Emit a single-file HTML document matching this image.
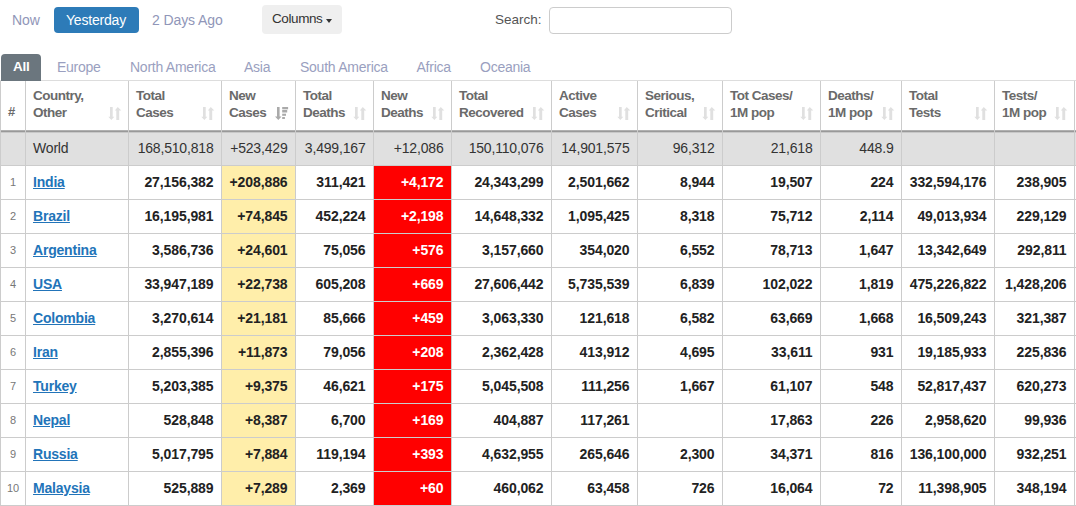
<!DOCTYPE html><html><head><meta charset="utf-8"><style>
html,body{margin:0;padding:0;background:#fff;width:1076px;height:506px;overflow:hidden;position:relative;font-family:"Liberation Sans",sans-serif;}
.a{position:absolute;white-space:nowrap;}
.t{position:absolute;white-space:nowrap;line-height:20px;}
.r{text-align:right;}
.hl{position:absolute;height:1px;}
.vl{position:absolute;width:1px;}

</style></head><body>
<div class="t" style="left:12px;top:10px;font-size:14px;color:#9096b8;letter-spacing:-0.1px;">Now</div>
<div class="a" style="left:54px;top:7px;width:85px;height:26px;background:#2d7bb8;border-radius:4px"></div>
<div class="t" style="left:66px;top:10px;font-size:14px;color:#fff;letter-spacing:-0.2px;">Yesterday</div>
<div class="t" style="left:152px;top:10px;font-size:14px;color:#9096b8;letter-spacing:-0.1px;">2 Days Ago</div>
<div class="a" style="left:262px;top:5px;width:80px;height:29px;background:#efefef;border-radius:4px"></div>
<div class="t" style="left:272px;top:9px;font-size:13.5px;color:#333;letter-spacing:-0.4px;">Columns</div>
<div class="a" style="left:326px;top:19px;width:0;height:0;border-left:3.5px solid transparent;border-right:3.5px solid transparent;border-top:4px solid #333"></div>
<div class="t" style="left:495px;top:9.5px;font-size:13.5px;color:#555;letter-spacing:0px;">Search:</div>
<div class="a" style="left:549px;top:7px;width:181px;height:25px;border:1px solid #ccc;border-radius:4px;background:#fff"></div>
<div class="a" style="left:1px;top:54px;width:40px;height:27px;background:#6b767e;border-radius:4px 4px 0 0"></div>
<div class="t" style="left:13px;top:57px;font-size:13.5px;color:#fff;letter-spacing:-0.3px;font-weight:700">All</div>
<div class="t" style="left:57px;top:57px;font-size:14px;color:#9a9fc0;letter-spacing:-0.25px;">Europe</div>
<div class="t" style="left:130px;top:57px;font-size:14px;color:#9a9fc0;letter-spacing:-0.25px;">North America</div>
<div class="t" style="left:244px;top:57px;font-size:14px;color:#9a9fc0;letter-spacing:-0.25px;">Asia</div>
<div class="t" style="left:300px;top:57px;font-size:14px;color:#9a9fc0;letter-spacing:-0.25px;">South America</div>
<div class="t" style="left:416.5px;top:57px;font-size:14px;color:#9a9fc0;letter-spacing:-0.25px;">Africa</div>
<div class="t" style="left:480px;top:57px;font-size:14px;color:#9a9fc0;letter-spacing:-0.25px;">Oceania</div>
<div class="a" style="left:0;top:132px;width:1076px;height:33px;background:#e0e0e0"></div>
<div class="a" style="left:222px;top:166px;width:73px;height:339px;background:#ffeeaa"></div>
<div class="a" style="left:374px;top:166px;width:77px;height:339px;background:#ff0000"></div>
<div class="hl" style="left:0;top:80px;width:1076px;background:#ddd"></div>
<div class="hl" style="left:0;top:130px;width:1076px;background:#b0b0b0"></div>
<div class="hl" style="left:0;top:131px;width:1076px;background:#999"></div>
<div class="hl" style="left:0;top:132px;width:1076px;background:#c8c8c8"></div>
<div class="hl" style="left:0;top:165px;width:1076px;background:#ccc"></div>
<div class="hl" style="left:0;top:199px;width:1076px;background:#ccc"></div>
<div class="hl" style="left:0;top:233px;width:1076px;background:#ccc"></div>
<div class="hl" style="left:0;top:267px;width:1076px;background:#ccc"></div>
<div class="hl" style="left:0;top:301px;width:1076px;background:#ccc"></div>
<div class="hl" style="left:0;top:335px;width:1076px;background:#ccc"></div>
<div class="hl" style="left:0;top:369px;width:1076px;background:#ccc"></div>
<div class="hl" style="left:0;top:403px;width:1076px;background:#ccc"></div>
<div class="hl" style="left:0;top:437px;width:1076px;background:#ccc"></div>
<div class="hl" style="left:0;top:471px;width:1076px;background:#ccc"></div>
<div class="hl" style="left:0;top:505px;width:1076px;background:#ccc"></div>
<div class="vl" style="left:0px;top:81px;height:425px;background:#ccc"></div>
<div class="vl" style="left:25px;top:81px;height:425px;background:#ccc"></div>
<div class="vl" style="left:128px;top:81px;height:425px;background:#ccc"></div>
<div class="vl" style="left:221px;top:81px;height:425px;background:#ccc"></div>
<div class="vl" style="left:295px;top:81px;height:425px;background:#ccc"></div>
<div class="vl" style="left:373px;top:81px;height:425px;background:#ccc"></div>
<div class="vl" style="left:451px;top:81px;height:425px;background:#ccc"></div>
<div class="vl" style="left:551px;top:81px;height:425px;background:#ccc"></div>
<div class="vl" style="left:637px;top:81px;height:425px;background:#ccc"></div>
<div class="vl" style="left:722px;top:81px;height:425px;background:#ccc"></div>
<div class="vl" style="left:820px;top:81px;height:425px;background:#ccc"></div>
<div class="vl" style="left:901px;top:81px;height:425px;background:#ccc"></div>
<div class="vl" style="left:994px;top:81px;height:425px;background:#ccc"></div>
<div class="vl" style="left:1074px;top:81px;height:425px;background:#ccc"></div>
<div class="a" style="left:1px;top:80px;width:40px;height:1px;background:#6b767e"></div>
<div class="a" style="left:8px;top:103px;font-size:13px;font-weight:bold;color:#6a6a6a;line-height:17px">#</div>
<div class="a" style="left:33px;top:87px;font-size:13.5px;font-weight:bold;color:#6a6a6a;line-height:17px;letter-spacing:-0.5px">Country,<br>Other</div>
<svg class="a" style="left:108px;top:106px" width="14" height="15" viewBox="0 0 14 15"><path d="M2 1H4.7V10.7H6.3L3.35 14L0.3 10.7H2Z" fill="#e0e0e0"/><path d="M8.3 14H11.2V4.5H13.3L9.75 1L6.8 4.5H8.3Z" fill="#e0e0e0"/></svg>
<div class="a" style="left:136px;top:87px;font-size:13.5px;font-weight:bold;color:#6a6a6a;line-height:17px;letter-spacing:-0.5px">Total<br>Cases</div>
<svg class="a" style="left:201px;top:106px" width="14" height="15" viewBox="0 0 14 15"><path d="M2 1H4.7V10.7H6.3L3.35 14L0.3 10.7H2Z" fill="#e0e0e0"/><path d="M8.3 14H11.2V4.5H13.3L9.75 1L6.8 4.5H8.3Z" fill="#e0e0e0"/></svg>
<div class="a" style="left:229px;top:87px;font-size:13.5px;font-weight:bold;color:#6a6a6a;line-height:17px;letter-spacing:-0.5px">New<br>Cases</div>
<svg class="a" style="left:275px;top:106px" width="14" height="15" viewBox="0 0 14 15"><path d="M2 1H4.6V10.5H6.5L3.3 14L0 10.5H2Z" fill="#aaa"/><rect x="7.2" y="1" width="5.9" height="2.3" fill="#aaa"/><rect x="7.2" y="4" width="5" height="2.5" fill="#aaa"/><rect x="7.2" y="7.7" width="3.8" height="2.1" fill="#aaa"/><rect x="7.2" y="11" width="2.7" height="2" fill="#aaa"/></svg>
<div class="a" style="left:303px;top:87px;font-size:13.5px;font-weight:bold;color:#6a6a6a;line-height:17px;letter-spacing:-0.5px">Total<br>Deaths</div>
<svg class="a" style="left:353px;top:106px" width="14" height="15" viewBox="0 0 14 15"><path d="M2 1H4.7V10.7H6.3L3.35 14L0.3 10.7H2Z" fill="#e0e0e0"/><path d="M8.3 14H11.2V4.5H13.3L9.75 1L6.8 4.5H8.3Z" fill="#e0e0e0"/></svg>
<div class="a" style="left:381px;top:87px;font-size:13.5px;font-weight:bold;color:#6a6a6a;line-height:17px;letter-spacing:-0.5px">New<br>Deaths</div>
<svg class="a" style="left:431px;top:106px" width="14" height="15" viewBox="0 0 14 15"><path d="M2 1H4.7V10.7H6.3L3.35 14L0.3 10.7H2Z" fill="#e0e0e0"/><path d="M8.3 14H11.2V4.5H13.3L9.75 1L6.8 4.5H8.3Z" fill="#e0e0e0"/></svg>
<div class="a" style="left:459px;top:87px;font-size:13.5px;font-weight:bold;color:#6a6a6a;line-height:17px;letter-spacing:-0.5px">Total<br>Recovered</div>
<svg class="a" style="left:531px;top:106px" width="14" height="15" viewBox="0 0 14 15"><path d="M2 1H4.7V10.7H6.3L3.35 14L0.3 10.7H2Z" fill="#e0e0e0"/><path d="M8.3 14H11.2V4.5H13.3L9.75 1L6.8 4.5H8.3Z" fill="#e0e0e0"/></svg>
<div class="a" style="left:559px;top:87px;font-size:13.5px;font-weight:bold;color:#6a6a6a;line-height:17px;letter-spacing:-0.5px">Active<br>Cases</div>
<svg class="a" style="left:617px;top:106px" width="14" height="15" viewBox="0 0 14 15"><path d="M2 1H4.7V10.7H6.3L3.35 14L0.3 10.7H2Z" fill="#e0e0e0"/><path d="M8.3 14H11.2V4.5H13.3L9.75 1L6.8 4.5H8.3Z" fill="#e0e0e0"/></svg>
<div class="a" style="left:645px;top:87px;font-size:13.5px;font-weight:bold;color:#6a6a6a;line-height:17px;letter-spacing:-0.5px">Serious,<br>Critical</div>
<svg class="a" style="left:702px;top:106px" width="14" height="15" viewBox="0 0 14 15"><path d="M2 1H4.7V10.7H6.3L3.35 14L0.3 10.7H2Z" fill="#e0e0e0"/><path d="M8.3 14H11.2V4.5H13.3L9.75 1L6.8 4.5H8.3Z" fill="#e0e0e0"/></svg>
<div class="a" style="left:730px;top:87px;font-size:13.5px;font-weight:bold;color:#6a6a6a;line-height:17px;letter-spacing:-0.5px">Tot&nbsp;Cases/<br>1M pop</div>
<svg class="a" style="left:800px;top:106px" width="14" height="15" viewBox="0 0 14 15"><path d="M2 1H4.7V10.7H6.3L3.35 14L0.3 10.7H2Z" fill="#e0e0e0"/><path d="M8.3 14H11.2V4.5H13.3L9.75 1L6.8 4.5H8.3Z" fill="#e0e0e0"/></svg>
<div class="a" style="left:828px;top:87px;font-size:13.5px;font-weight:bold;color:#6a6a6a;line-height:17px;letter-spacing:-0.5px">Deaths/<br>1M pop</div>
<svg class="a" style="left:881px;top:106px" width="14" height="15" viewBox="0 0 14 15"><path d="M2 1H4.7V10.7H6.3L3.35 14L0.3 10.7H2Z" fill="#e0e0e0"/><path d="M8.3 14H11.2V4.5H13.3L9.75 1L6.8 4.5H8.3Z" fill="#e0e0e0"/></svg>
<div class="a" style="left:909px;top:87px;font-size:13.5px;font-weight:bold;color:#6a6a6a;line-height:17px;letter-spacing:-0.5px">Total<br>Tests</div>
<svg class="a" style="left:974px;top:106px" width="14" height="15" viewBox="0 0 14 15"><path d="M2 1H4.7V10.7H6.3L3.35 14L0.3 10.7H2Z" fill="#e0e0e0"/><path d="M8.3 14H11.2V4.5H13.3L9.75 1L6.8 4.5H8.3Z" fill="#e0e0e0"/></svg>
<div class="a" style="left:1002px;top:87px;font-size:13.5px;font-weight:bold;color:#6a6a6a;line-height:17px;letter-spacing:-0.5px">Tests/<br>1M pop</div>
<svg class="a" style="left:1054px;top:106px" width="14" height="15" viewBox="0 0 14 15"><path d="M2 1H4.7V10.7H6.3L3.35 14L0.3 10.7H2Z" fill="#e0e0e0"/><path d="M8.3 14H11.2V4.5H13.3L9.75 1L6.8 4.5H8.3Z" fill="#e0e0e0"/></svg>
<div class="a" style="left:33px;top:132px;line-height:33px;font-size:14px;color:#333;letter-spacing:-0.18px">World</div>
<div class="a r" style="left:128px;width:85.5px;top:132px;line-height:33px;font-size:14px;color:#333;letter-spacing:-0.18px">168,510,818</div>
<div class="a r" style="left:221px;width:66.5px;top:132px;line-height:33px;font-size:14px;color:#333;letter-spacing:-0.18px">+523,429</div>
<div class="a r" style="left:295px;width:70.5px;top:132px;line-height:33px;font-size:14px;color:#333;letter-spacing:-0.18px">3,499,167</div>
<div class="a r" style="left:373px;width:70.5px;top:132px;line-height:33px;font-size:14px;color:#333;letter-spacing:-0.18px">+12,086</div>
<div class="a r" style="left:451px;width:92.5px;top:132px;line-height:33px;font-size:14px;color:#333;letter-spacing:-0.18px">150,110,076</div>
<div class="a r" style="left:551px;width:78.5px;top:132px;line-height:33px;font-size:14px;color:#333;letter-spacing:-0.18px">14,901,575</div>
<div class="a r" style="left:637px;width:77.5px;top:132px;line-height:33px;font-size:14px;color:#333;letter-spacing:-0.18px">96,312</div>
<div class="a r" style="left:722px;width:90.5px;top:132px;line-height:33px;font-size:14px;color:#333;letter-spacing:-0.18px">21,618</div>
<div class="a r" style="left:820px;width:73.5px;top:132px;line-height:33px;font-size:14px;color:#333;letter-spacing:-0.18px">448.9</div>
<div class="a" style="left:1px;width:24px;text-align:center;top:166px;line-height:33px;font-size:11px;color:#777">1</div>
<div class="a" style="left:33px;top:166px;line-height:33px;font-size:14px;font-weight:bold;color:#2274b9;text-decoration:underline;letter-spacing:-0.2px">India</div>
<div class="a r" style="left:128px;width:85.5px;top:166px;line-height:33px;font-size:14px;font-weight:bold;color:#222;letter-spacing:-0.1px">27,156,382</div>
<div class="a r" style="left:221px;width:66.5px;top:166px;line-height:33px;font-size:14px;font-weight:bold;color:#222;letter-spacing:-0.1px">+208,886</div>
<div class="a r" style="left:295px;width:70.5px;top:166px;line-height:33px;font-size:14px;font-weight:bold;color:#222;letter-spacing:-0.1px">311,421</div>
<div class="a r" style="left:373px;width:70.5px;top:166px;line-height:33px;font-size:14px;font-weight:bold;color:#fff;letter-spacing:-0.1px">+4,172</div>
<div class="a r" style="left:451px;width:92.5px;top:166px;line-height:33px;font-size:14px;font-weight:bold;color:#222;letter-spacing:-0.1px">24,343,299</div>
<div class="a r" style="left:551px;width:78.5px;top:166px;line-height:33px;font-size:14px;font-weight:bold;color:#222;letter-spacing:-0.1px">2,501,662</div>
<div class="a r" style="left:637px;width:77.5px;top:166px;line-height:33px;font-size:14px;font-weight:bold;color:#222;letter-spacing:-0.1px">8,944</div>
<div class="a r" style="left:722px;width:90.5px;top:166px;line-height:33px;font-size:14px;font-weight:bold;color:#222;letter-spacing:-0.1px">19,507</div>
<div class="a r" style="left:820px;width:73.5px;top:166px;line-height:33px;font-size:14px;font-weight:bold;color:#222;letter-spacing:-0.1px">224</div>
<div class="a r" style="left:901px;width:85.5px;top:166px;line-height:33px;font-size:14px;font-weight:bold;color:#222;letter-spacing:-0.1px">332,594,176</div>
<div class="a r" style="left:994px;width:72.5px;top:166px;line-height:33px;font-size:14px;font-weight:bold;color:#222;letter-spacing:-0.1px">238,905</div>
<div class="a" style="left:1px;width:24px;text-align:center;top:200px;line-height:33px;font-size:11px;color:#777">2</div>
<div class="a" style="left:33px;top:200px;line-height:33px;font-size:14px;font-weight:bold;color:#2274b9;text-decoration:underline;letter-spacing:-0.2px">Brazil</div>
<div class="a r" style="left:128px;width:85.5px;top:200px;line-height:33px;font-size:14px;font-weight:bold;color:#222;letter-spacing:-0.1px">16,195,981</div>
<div class="a r" style="left:221px;width:66.5px;top:200px;line-height:33px;font-size:14px;font-weight:bold;color:#222;letter-spacing:-0.1px">+74,845</div>
<div class="a r" style="left:295px;width:70.5px;top:200px;line-height:33px;font-size:14px;font-weight:bold;color:#222;letter-spacing:-0.1px">452,224</div>
<div class="a r" style="left:373px;width:70.5px;top:200px;line-height:33px;font-size:14px;font-weight:bold;color:#fff;letter-spacing:-0.1px">+2,198</div>
<div class="a r" style="left:451px;width:92.5px;top:200px;line-height:33px;font-size:14px;font-weight:bold;color:#222;letter-spacing:-0.1px">14,648,332</div>
<div class="a r" style="left:551px;width:78.5px;top:200px;line-height:33px;font-size:14px;font-weight:bold;color:#222;letter-spacing:-0.1px">1,095,425</div>
<div class="a r" style="left:637px;width:77.5px;top:200px;line-height:33px;font-size:14px;font-weight:bold;color:#222;letter-spacing:-0.1px">8,318</div>
<div class="a r" style="left:722px;width:90.5px;top:200px;line-height:33px;font-size:14px;font-weight:bold;color:#222;letter-spacing:-0.1px">75,712</div>
<div class="a r" style="left:820px;width:73.5px;top:200px;line-height:33px;font-size:14px;font-weight:bold;color:#222;letter-spacing:-0.1px">2,114</div>
<div class="a r" style="left:901px;width:85.5px;top:200px;line-height:33px;font-size:14px;font-weight:bold;color:#222;letter-spacing:-0.1px">49,013,934</div>
<div class="a r" style="left:994px;width:72.5px;top:200px;line-height:33px;font-size:14px;font-weight:bold;color:#222;letter-spacing:-0.1px">229,129</div>
<div class="a" style="left:1px;width:24px;text-align:center;top:234px;line-height:33px;font-size:11px;color:#777">3</div>
<div class="a" style="left:33px;top:234px;line-height:33px;font-size:14px;font-weight:bold;color:#2274b9;text-decoration:underline;letter-spacing:-0.2px">Argentina</div>
<div class="a r" style="left:128px;width:85.5px;top:234px;line-height:33px;font-size:14px;font-weight:bold;color:#222;letter-spacing:-0.1px">3,586,736</div>
<div class="a r" style="left:221px;width:66.5px;top:234px;line-height:33px;font-size:14px;font-weight:bold;color:#222;letter-spacing:-0.1px">+24,601</div>
<div class="a r" style="left:295px;width:70.5px;top:234px;line-height:33px;font-size:14px;font-weight:bold;color:#222;letter-spacing:-0.1px">75,056</div>
<div class="a r" style="left:373px;width:70.5px;top:234px;line-height:33px;font-size:14px;font-weight:bold;color:#fff;letter-spacing:-0.1px">+576</div>
<div class="a r" style="left:451px;width:92.5px;top:234px;line-height:33px;font-size:14px;font-weight:bold;color:#222;letter-spacing:-0.1px">3,157,660</div>
<div class="a r" style="left:551px;width:78.5px;top:234px;line-height:33px;font-size:14px;font-weight:bold;color:#222;letter-spacing:-0.1px">354,020</div>
<div class="a r" style="left:637px;width:77.5px;top:234px;line-height:33px;font-size:14px;font-weight:bold;color:#222;letter-spacing:-0.1px">6,552</div>
<div class="a r" style="left:722px;width:90.5px;top:234px;line-height:33px;font-size:14px;font-weight:bold;color:#222;letter-spacing:-0.1px">78,713</div>
<div class="a r" style="left:820px;width:73.5px;top:234px;line-height:33px;font-size:14px;font-weight:bold;color:#222;letter-spacing:-0.1px">1,647</div>
<div class="a r" style="left:901px;width:85.5px;top:234px;line-height:33px;font-size:14px;font-weight:bold;color:#222;letter-spacing:-0.1px">13,342,649</div>
<div class="a r" style="left:994px;width:72.5px;top:234px;line-height:33px;font-size:14px;font-weight:bold;color:#222;letter-spacing:-0.1px">292,811</div>
<div class="a" style="left:1px;width:24px;text-align:center;top:268px;line-height:33px;font-size:11px;color:#777">4</div>
<div class="a" style="left:33px;top:268px;line-height:33px;font-size:14px;font-weight:bold;color:#2274b9;text-decoration:underline;letter-spacing:-0.2px">USA</div>
<div class="a r" style="left:128px;width:85.5px;top:268px;line-height:33px;font-size:14px;font-weight:bold;color:#222;letter-spacing:-0.1px">33,947,189</div>
<div class="a r" style="left:221px;width:66.5px;top:268px;line-height:33px;font-size:14px;font-weight:bold;color:#222;letter-spacing:-0.1px">+22,738</div>
<div class="a r" style="left:295px;width:70.5px;top:268px;line-height:33px;font-size:14px;font-weight:bold;color:#222;letter-spacing:-0.1px">605,208</div>
<div class="a r" style="left:373px;width:70.5px;top:268px;line-height:33px;font-size:14px;font-weight:bold;color:#fff;letter-spacing:-0.1px">+669</div>
<div class="a r" style="left:451px;width:92.5px;top:268px;line-height:33px;font-size:14px;font-weight:bold;color:#222;letter-spacing:-0.1px">27,606,442</div>
<div class="a r" style="left:551px;width:78.5px;top:268px;line-height:33px;font-size:14px;font-weight:bold;color:#222;letter-spacing:-0.1px">5,735,539</div>
<div class="a r" style="left:637px;width:77.5px;top:268px;line-height:33px;font-size:14px;font-weight:bold;color:#222;letter-spacing:-0.1px">6,839</div>
<div class="a r" style="left:722px;width:90.5px;top:268px;line-height:33px;font-size:14px;font-weight:bold;color:#222;letter-spacing:-0.1px">102,022</div>
<div class="a r" style="left:820px;width:73.5px;top:268px;line-height:33px;font-size:14px;font-weight:bold;color:#222;letter-spacing:-0.1px">1,819</div>
<div class="a r" style="left:901px;width:85.5px;top:268px;line-height:33px;font-size:14px;font-weight:bold;color:#222;letter-spacing:-0.1px">475,226,822</div>
<div class="a r" style="left:994px;width:72.5px;top:268px;line-height:33px;font-size:14px;font-weight:bold;color:#222;letter-spacing:-0.1px">1,428,206</div>
<div class="a" style="left:1px;width:24px;text-align:center;top:302px;line-height:33px;font-size:11px;color:#777">5</div>
<div class="a" style="left:33px;top:302px;line-height:33px;font-size:14px;font-weight:bold;color:#2274b9;text-decoration:underline;letter-spacing:-0.2px">Colombia</div>
<div class="a r" style="left:128px;width:85.5px;top:302px;line-height:33px;font-size:14px;font-weight:bold;color:#222;letter-spacing:-0.1px">3,270,614</div>
<div class="a r" style="left:221px;width:66.5px;top:302px;line-height:33px;font-size:14px;font-weight:bold;color:#222;letter-spacing:-0.1px">+21,181</div>
<div class="a r" style="left:295px;width:70.5px;top:302px;line-height:33px;font-size:14px;font-weight:bold;color:#222;letter-spacing:-0.1px">85,666</div>
<div class="a r" style="left:373px;width:70.5px;top:302px;line-height:33px;font-size:14px;font-weight:bold;color:#fff;letter-spacing:-0.1px">+459</div>
<div class="a r" style="left:451px;width:92.5px;top:302px;line-height:33px;font-size:14px;font-weight:bold;color:#222;letter-spacing:-0.1px">3,063,330</div>
<div class="a r" style="left:551px;width:78.5px;top:302px;line-height:33px;font-size:14px;font-weight:bold;color:#222;letter-spacing:-0.1px">121,618</div>
<div class="a r" style="left:637px;width:77.5px;top:302px;line-height:33px;font-size:14px;font-weight:bold;color:#222;letter-spacing:-0.1px">6,582</div>
<div class="a r" style="left:722px;width:90.5px;top:302px;line-height:33px;font-size:14px;font-weight:bold;color:#222;letter-spacing:-0.1px">63,669</div>
<div class="a r" style="left:820px;width:73.5px;top:302px;line-height:33px;font-size:14px;font-weight:bold;color:#222;letter-spacing:-0.1px">1,668</div>
<div class="a r" style="left:901px;width:85.5px;top:302px;line-height:33px;font-size:14px;font-weight:bold;color:#222;letter-spacing:-0.1px">16,509,243</div>
<div class="a r" style="left:994px;width:72.5px;top:302px;line-height:33px;font-size:14px;font-weight:bold;color:#222;letter-spacing:-0.1px">321,387</div>
<div class="a" style="left:1px;width:24px;text-align:center;top:336px;line-height:33px;font-size:11px;color:#777">6</div>
<div class="a" style="left:33px;top:336px;line-height:33px;font-size:14px;font-weight:bold;color:#2274b9;text-decoration:underline;letter-spacing:-0.2px">Iran</div>
<div class="a r" style="left:128px;width:85.5px;top:336px;line-height:33px;font-size:14px;font-weight:bold;color:#222;letter-spacing:-0.1px">2,855,396</div>
<div class="a r" style="left:221px;width:66.5px;top:336px;line-height:33px;font-size:14px;font-weight:bold;color:#222;letter-spacing:-0.1px">+11,873</div>
<div class="a r" style="left:295px;width:70.5px;top:336px;line-height:33px;font-size:14px;font-weight:bold;color:#222;letter-spacing:-0.1px">79,056</div>
<div class="a r" style="left:373px;width:70.5px;top:336px;line-height:33px;font-size:14px;font-weight:bold;color:#fff;letter-spacing:-0.1px">+208</div>
<div class="a r" style="left:451px;width:92.5px;top:336px;line-height:33px;font-size:14px;font-weight:bold;color:#222;letter-spacing:-0.1px">2,362,428</div>
<div class="a r" style="left:551px;width:78.5px;top:336px;line-height:33px;font-size:14px;font-weight:bold;color:#222;letter-spacing:-0.1px">413,912</div>
<div class="a r" style="left:637px;width:77.5px;top:336px;line-height:33px;font-size:14px;font-weight:bold;color:#222;letter-spacing:-0.1px">4,695</div>
<div class="a r" style="left:722px;width:90.5px;top:336px;line-height:33px;font-size:14px;font-weight:bold;color:#222;letter-spacing:-0.1px">33,611</div>
<div class="a r" style="left:820px;width:73.5px;top:336px;line-height:33px;font-size:14px;font-weight:bold;color:#222;letter-spacing:-0.1px">931</div>
<div class="a r" style="left:901px;width:85.5px;top:336px;line-height:33px;font-size:14px;font-weight:bold;color:#222;letter-spacing:-0.1px">19,185,933</div>
<div class="a r" style="left:994px;width:72.5px;top:336px;line-height:33px;font-size:14px;font-weight:bold;color:#222;letter-spacing:-0.1px">225,836</div>
<div class="a" style="left:1px;width:24px;text-align:center;top:370px;line-height:33px;font-size:11px;color:#777">7</div>
<div class="a" style="left:33px;top:370px;line-height:33px;font-size:14px;font-weight:bold;color:#2274b9;text-decoration:underline;letter-spacing:-0.2px">Turkey</div>
<div class="a r" style="left:128px;width:85.5px;top:370px;line-height:33px;font-size:14px;font-weight:bold;color:#222;letter-spacing:-0.1px">5,203,385</div>
<div class="a r" style="left:221px;width:66.5px;top:370px;line-height:33px;font-size:14px;font-weight:bold;color:#222;letter-spacing:-0.1px">+9,375</div>
<div class="a r" style="left:295px;width:70.5px;top:370px;line-height:33px;font-size:14px;font-weight:bold;color:#222;letter-spacing:-0.1px">46,621</div>
<div class="a r" style="left:373px;width:70.5px;top:370px;line-height:33px;font-size:14px;font-weight:bold;color:#fff;letter-spacing:-0.1px">+175</div>
<div class="a r" style="left:451px;width:92.5px;top:370px;line-height:33px;font-size:14px;font-weight:bold;color:#222;letter-spacing:-0.1px">5,045,508</div>
<div class="a r" style="left:551px;width:78.5px;top:370px;line-height:33px;font-size:14px;font-weight:bold;color:#222;letter-spacing:-0.1px">111,256</div>
<div class="a r" style="left:637px;width:77.5px;top:370px;line-height:33px;font-size:14px;font-weight:bold;color:#222;letter-spacing:-0.1px">1,667</div>
<div class="a r" style="left:722px;width:90.5px;top:370px;line-height:33px;font-size:14px;font-weight:bold;color:#222;letter-spacing:-0.1px">61,107</div>
<div class="a r" style="left:820px;width:73.5px;top:370px;line-height:33px;font-size:14px;font-weight:bold;color:#222;letter-spacing:-0.1px">548</div>
<div class="a r" style="left:901px;width:85.5px;top:370px;line-height:33px;font-size:14px;font-weight:bold;color:#222;letter-spacing:-0.1px">52,817,437</div>
<div class="a r" style="left:994px;width:72.5px;top:370px;line-height:33px;font-size:14px;font-weight:bold;color:#222;letter-spacing:-0.1px">620,273</div>
<div class="a" style="left:1px;width:24px;text-align:center;top:404px;line-height:33px;font-size:11px;color:#777">8</div>
<div class="a" style="left:33px;top:404px;line-height:33px;font-size:14px;font-weight:bold;color:#2274b9;text-decoration:underline;letter-spacing:-0.2px">Nepal</div>
<div class="a r" style="left:128px;width:85.5px;top:404px;line-height:33px;font-size:14px;font-weight:bold;color:#222;letter-spacing:-0.1px">528,848</div>
<div class="a r" style="left:221px;width:66.5px;top:404px;line-height:33px;font-size:14px;font-weight:bold;color:#222;letter-spacing:-0.1px">+8,387</div>
<div class="a r" style="left:295px;width:70.5px;top:404px;line-height:33px;font-size:14px;font-weight:bold;color:#222;letter-spacing:-0.1px">6,700</div>
<div class="a r" style="left:373px;width:70.5px;top:404px;line-height:33px;font-size:14px;font-weight:bold;color:#fff;letter-spacing:-0.1px">+169</div>
<div class="a r" style="left:451px;width:92.5px;top:404px;line-height:33px;font-size:14px;font-weight:bold;color:#222;letter-spacing:-0.1px">404,887</div>
<div class="a r" style="left:551px;width:78.5px;top:404px;line-height:33px;font-size:14px;font-weight:bold;color:#222;letter-spacing:-0.1px">117,261</div>
<div class="a r" style="left:722px;width:90.5px;top:404px;line-height:33px;font-size:14px;font-weight:bold;color:#222;letter-spacing:-0.1px">17,863</div>
<div class="a r" style="left:820px;width:73.5px;top:404px;line-height:33px;font-size:14px;font-weight:bold;color:#222;letter-spacing:-0.1px">226</div>
<div class="a r" style="left:901px;width:85.5px;top:404px;line-height:33px;font-size:14px;font-weight:bold;color:#222;letter-spacing:-0.1px">2,958,620</div>
<div class="a r" style="left:994px;width:72.5px;top:404px;line-height:33px;font-size:14px;font-weight:bold;color:#222;letter-spacing:-0.1px">99,936</div>
<div class="a" style="left:1px;width:24px;text-align:center;top:438px;line-height:33px;font-size:11px;color:#777">9</div>
<div class="a" style="left:33px;top:438px;line-height:33px;font-size:14px;font-weight:bold;color:#2274b9;text-decoration:underline;letter-spacing:-0.2px">Russia</div>
<div class="a r" style="left:128px;width:85.5px;top:438px;line-height:33px;font-size:14px;font-weight:bold;color:#222;letter-spacing:-0.1px">5,017,795</div>
<div class="a r" style="left:221px;width:66.5px;top:438px;line-height:33px;font-size:14px;font-weight:bold;color:#222;letter-spacing:-0.1px">+7,884</div>
<div class="a r" style="left:295px;width:70.5px;top:438px;line-height:33px;font-size:14px;font-weight:bold;color:#222;letter-spacing:-0.1px">119,194</div>
<div class="a r" style="left:373px;width:70.5px;top:438px;line-height:33px;font-size:14px;font-weight:bold;color:#fff;letter-spacing:-0.1px">+393</div>
<div class="a r" style="left:451px;width:92.5px;top:438px;line-height:33px;font-size:14px;font-weight:bold;color:#222;letter-spacing:-0.1px">4,632,955</div>
<div class="a r" style="left:551px;width:78.5px;top:438px;line-height:33px;font-size:14px;font-weight:bold;color:#222;letter-spacing:-0.1px">265,646</div>
<div class="a r" style="left:637px;width:77.5px;top:438px;line-height:33px;font-size:14px;font-weight:bold;color:#222;letter-spacing:-0.1px">2,300</div>
<div class="a r" style="left:722px;width:90.5px;top:438px;line-height:33px;font-size:14px;font-weight:bold;color:#222;letter-spacing:-0.1px">34,371</div>
<div class="a r" style="left:820px;width:73.5px;top:438px;line-height:33px;font-size:14px;font-weight:bold;color:#222;letter-spacing:-0.1px">816</div>
<div class="a r" style="left:901px;width:85.5px;top:438px;line-height:33px;font-size:14px;font-weight:bold;color:#222;letter-spacing:-0.1px">136,100,000</div>
<div class="a r" style="left:994px;width:72.5px;top:438px;line-height:33px;font-size:14px;font-weight:bold;color:#222;letter-spacing:-0.1px">932,251</div>
<div class="a" style="left:1px;width:24px;text-align:center;top:472px;line-height:33px;font-size:11px;color:#777">10</div>
<div class="a" style="left:33px;top:472px;line-height:33px;font-size:14px;font-weight:bold;color:#2274b9;text-decoration:underline;letter-spacing:-0.2px">Malaysia</div>
<div class="a r" style="left:128px;width:85.5px;top:472px;line-height:33px;font-size:14px;font-weight:bold;color:#222;letter-spacing:-0.1px">525,889</div>
<div class="a r" style="left:221px;width:66.5px;top:472px;line-height:33px;font-size:14px;font-weight:bold;color:#222;letter-spacing:-0.1px">+7,289</div>
<div class="a r" style="left:295px;width:70.5px;top:472px;line-height:33px;font-size:14px;font-weight:bold;color:#222;letter-spacing:-0.1px">2,369</div>
<div class="a r" style="left:373px;width:70.5px;top:472px;line-height:33px;font-size:14px;font-weight:bold;color:#fff;letter-spacing:-0.1px">+60</div>
<div class="a r" style="left:451px;width:92.5px;top:472px;line-height:33px;font-size:14px;font-weight:bold;color:#222;letter-spacing:-0.1px">460,062</div>
<div class="a r" style="left:551px;width:78.5px;top:472px;line-height:33px;font-size:14px;font-weight:bold;color:#222;letter-spacing:-0.1px">63,458</div>
<div class="a r" style="left:637px;width:77.5px;top:472px;line-height:33px;font-size:14px;font-weight:bold;color:#222;letter-spacing:-0.1px">726</div>
<div class="a r" style="left:722px;width:90.5px;top:472px;line-height:33px;font-size:14px;font-weight:bold;color:#222;letter-spacing:-0.1px">16,064</div>
<div class="a r" style="left:820px;width:73.5px;top:472px;line-height:33px;font-size:14px;font-weight:bold;color:#222;letter-spacing:-0.1px">72</div>
<div class="a r" style="left:901px;width:85.5px;top:472px;line-height:33px;font-size:14px;font-weight:bold;color:#222;letter-spacing:-0.1px">11,398,905</div>
<div class="a r" style="left:994px;width:72.5px;top:472px;line-height:33px;font-size:14px;font-weight:bold;color:#222;letter-spacing:-0.1px">348,194</div>
</body></html>
